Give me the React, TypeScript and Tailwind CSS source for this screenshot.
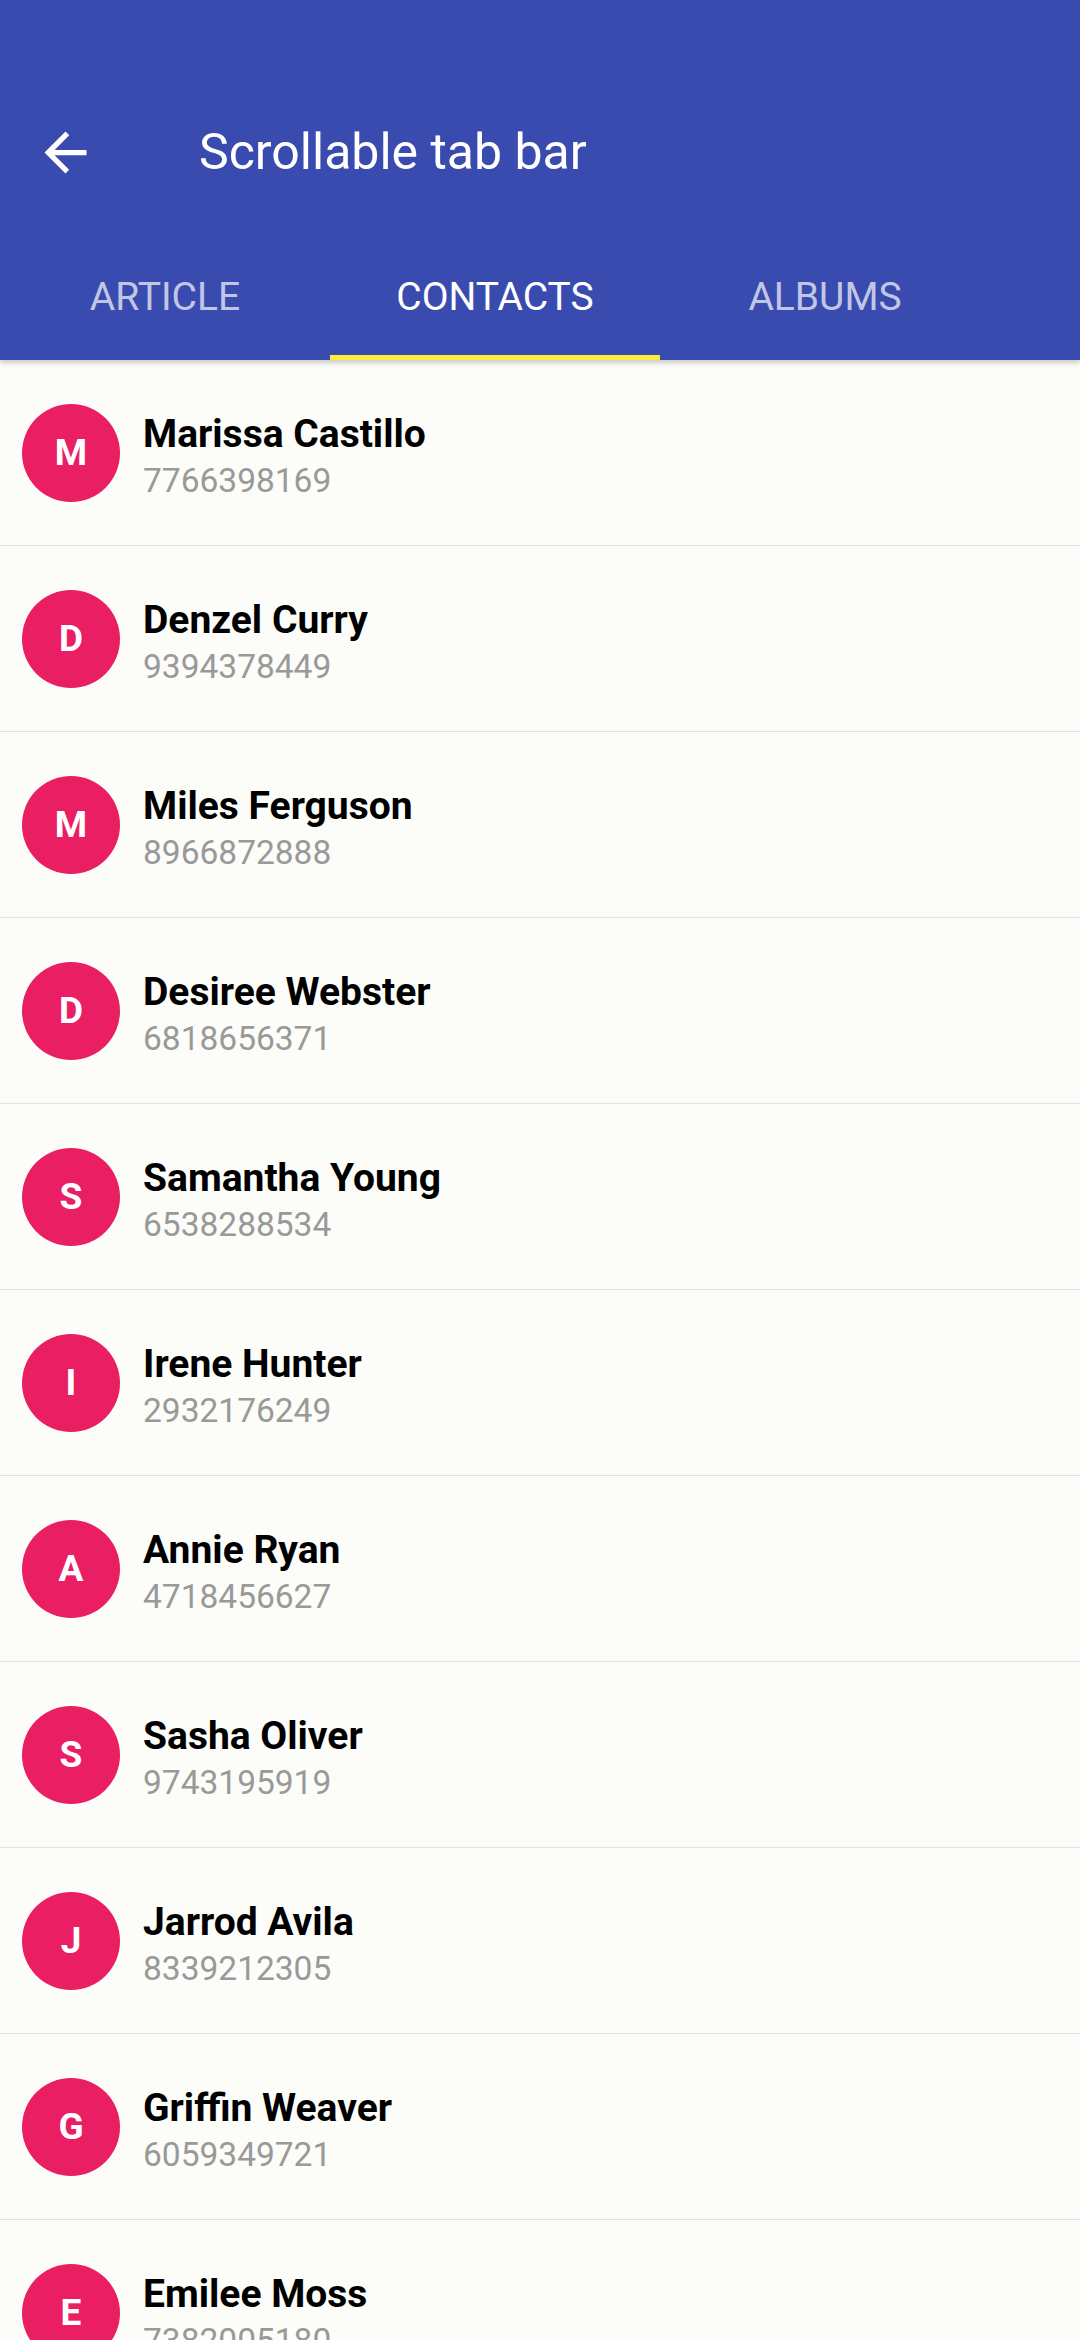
import React from 'react';

const contacts = [
  { name: 'Marissa Castillo', phone: '7766398169' },
  { name: 'Denzel Curry', phone: '9394378449' },
  { name: 'Miles Ferguson', phone: '8966872888' },
  { name: 'Desiree Webster', phone: '6818656371' },
  { name: 'Samantha Young', phone: '6538288534' },
  { name: 'Irene Hunter', phone: '2932176249' },
  { name: 'Annie Ryan', phone: '4718456627' },
  { name: 'Sasha Oliver', phone: '9743195919' },
  { name: 'Jarrod Avila', phone: '8339212305' },
  { name: 'Griffin Weaver', phone: '6059349721' },
  { name: 'Emilee Moss', phone: '7382005180' },
];

const tabs = ['ARTICLE', 'CONTACTS', 'ALBUMS'];

const App: React.FC = () => {
  return (
    <div className="w-[1080px] h-[2340px] overflow-hidden bg-[#fcfcf9] font-['Roboto','Liberation_Sans',sans-serif]">
      {/* app bar */}
      <div className="relative z-10 bg-[#3a4bb0] shadow-[0_2px_6px_rgba(0,0,0,0.25)]">
        <div className="h-[234px] pt-[89px]">
          <div className="flex h-[126px] items-center">
            <div className="ml-[34px] flex h-[63px] w-[63px] items-center justify-center">
              <svg width="63" height="63" viewBox="0 0 24 24" fill="white">
                <path d="M20 11H7.83l5.59-5.59L12 4l-8 8 8 8 1.41-1.41L7.83 13H20v-2z" />
              </svg>
            </div>
            <h1 className="ml-[102px] text-[50px] font-normal leading-none text-white">Scrollable tab bar</h1>
          </div>
        </div>
        <div className="flex h-[126px]">
          {tabs.map((t, i) => (
            <div key={t} className="relative flex w-[330px] items-center justify-center">
              <span
                className={
                  i === 1
                    ? 'text-[39px] leading-none text-white'
                    : 'text-[39px] leading-none text-white/70'
                }
              >
                {t}
              </span>
              {i === 1 && <div className="absolute bottom-0 left-0 h-[5px] w-full bg-[#ffeb3b]" />}
            </div>
          ))}
        </div>
      </div>

      {/* contacts list */}
      <div>
        {contacts.map((c) => (
          <div key={c.name} className="flex h-[186px] items-center border-b border-[#e3e3e3]">
            <div className="ml-[22px] flex h-[98px] w-[98px] shrink-0 items-center justify-center rounded-full bg-[#e91e63]">
              <span className="text-[37px] font-bold leading-none text-white">{c.name[0]}</span>
            </div>
            <div className="ml-[23px] mt-[6px] flex flex-col">
              <span className="text-[39px] font-bold leading-[44px] text-black">{c.name}</span>
              <span className="mt-[6px] text-[33.5px] leading-[38px] text-[#999999]">{c.phone}</span>
            </div>
          </div>
        ))}
      </div>
    </div>
  );
};

export default App;
